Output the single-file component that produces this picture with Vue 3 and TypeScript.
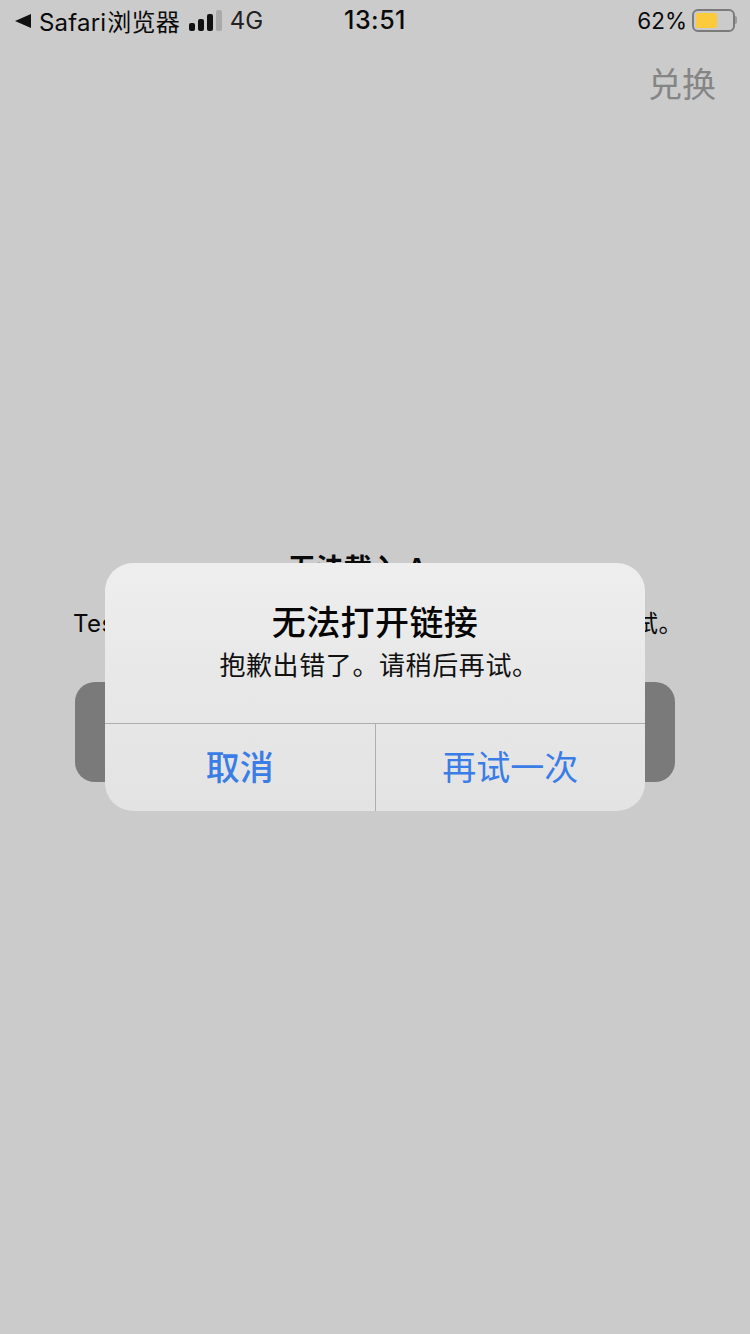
<script setup lang="ts">
const messageTitle: string = '无法打开链接'
const messageBody: string = '抱歉出错了。请稍后再试。'
</script>

<template>
  <div class="page">
    <header class="status">
      <div class="status-left">
        <svg class="back" width="16" height="14" viewBox="0 0 16 14"><path d="M16 0V14L0 7Z" fill="#111" /></svg>
        <span class="carrier">Safari 浏览器</span>
        <div class="signal">
          <i class="bar b1"></i><i class="bar b2"></i><i class="bar b3"></i><i class="bar b4"></i>
        </div>
        <span class="net">4G</span>
      </div>
      <div class="time">13:51</div>
      <div class="status-right">
        <span class="pct">62%</span>
        <div class="battery"><div class="level"></div></div>
        <div class="nub"></div>
      </div>
    </header>

    <nav class="nav"><span class="redeem">兑换</span></nav>

    <main class="content">
      <h1 class="err-title">无法载入 App</h1>
      <p class="err-text">TestFlight 目前无法处理你的兑换码请求，请稍后再试。</p>
      <div class="err-btn"></div>
    </main>

    <section class="alert">
      <div class="alert-body">
        <div class="alert-title">{{ messageTitle }}</div>
        <div class="alert-msg">{{ messageBody }}</div>
      </div>
      <div class="alert-actions">
        <div class="action strong">取消</div>
        <div class="action">再试一次</div>
      </div>
    </section>
  </div>
</template>

<style>
html, body { margin: 0; background: #cbcbcb; }
</style>

<style scoped>
.page {
  position: relative;
  width: 750px;
  height: 1334px;
  overflow: hidden;
  background: #cbcbcb;
  color: #0a0a0a;
  font-family: Inter, "Noto Sans CJK SC", sans-serif;
}
.status {
  height: 40px;
  padding: 0 13px 0 15px;
  box-sizing: border-box;
  display: grid;
  grid-template-columns: 1fr auto 1fr;
  align-items: center;
  font-size: 24px;
}
.status-left { display: flex; align-items: center; }
.back { margin: 2px 8px 0 0; }
.carrier { letter-spacing: 0.2px; word-spacing: -6px; white-space: nowrap; }
.signal { display: flex; align-items: flex-end; gap: 3px; margin-left: 9px; height: 21px; }
.bar { display: block; width: 6px; border-radius: 2px; background: #111; }
.b1 { height: 8px; }
.b2 { height: 12px; }
.b3 { height: 17px; }
.b4 { height: 21px; background: #aaaaaa; }
.net { margin-left: 8px; color: #222; }
.time { margin-right: 2px; font-size: 25px; font-weight: 500; letter-spacing: 0.5px; }
.status-right { display: flex; align-items: center; justify-content: flex-end; }
.pct { margin-right: 5px; font-size: 22.5px; }
.battery {
  box-sizing: border-box;
  width: 43px;
  height: 23px;
  padding: 2px;
  border: 2px solid #7b7b7b;
  border-radius: 6px;
}
.level { width: 21px; height: 100%; border-radius: 2px; background: #fccb3c; }
.nub { width: 2px; height: 8px; border-radius: 0 2px 2px 0; background: #9a9a9a; }
.nav {
  display: flex;
  justify-content: flex-end;
  padding: 23px 34px 0 0;
}
.redeem { font-size: 34px; line-height: 44px; color: #858585; }
.content {
  position: absolute;
  top: 551px;
  left: 0;
  width: 750px;
  display: flex;
  flex-direction: column;
  align-items: center;
}
.err-title { margin: 0; font-size: 28px; line-height: 36px; font-weight: 600; }
.err-text { margin: 20px 0 0; padding-left: 6px; font-size: 24px; line-height: 34px; white-space: nowrap; letter-spacing: 0.4px; }
.err-btn { margin-top: 41px; width: 600px; height: 100px; border-radius: 20px; background: #7a7a7a; }
.alert {
  position: absolute;
  top: 563px;
  left: 105px;
  width: 540px;
  height: 248px;
  display: flex;
  flex-direction: column;
  border-radius: 28px;
  overflow: hidden;
  background: linear-gradient(180deg, #eeeeee 0%, #e8e8e8 45%, #e3e3e3 100%);
}
.alert-body {
  box-sizing: border-box;
  height: 161px;
  padding-top: 37px;
  text-align: center;
  border-bottom: 1px solid #aeaeae;
}
.alert-title { font-size: 34px; line-height: 46px; font-weight: 500; letter-spacing: 0.4px; color: #050505; }
.alert-msg { margin-top: 2px; padding-left: 8px; font-size: 26px; line-height: 36px; letter-spacing: 0.6px; color: #111; }
.alert-actions { flex: 1; display: flex; }
.action {
  flex: 1;
  display: flex;
  align-items: center;
  justify-content: center;
  padding-bottom: 5px;
  font-size: 34px;
  color: #3a7de6;
}
.action + .action { border-left: 1px solid #aeaeae; }
.strong { font-weight: 500; }
</style>
